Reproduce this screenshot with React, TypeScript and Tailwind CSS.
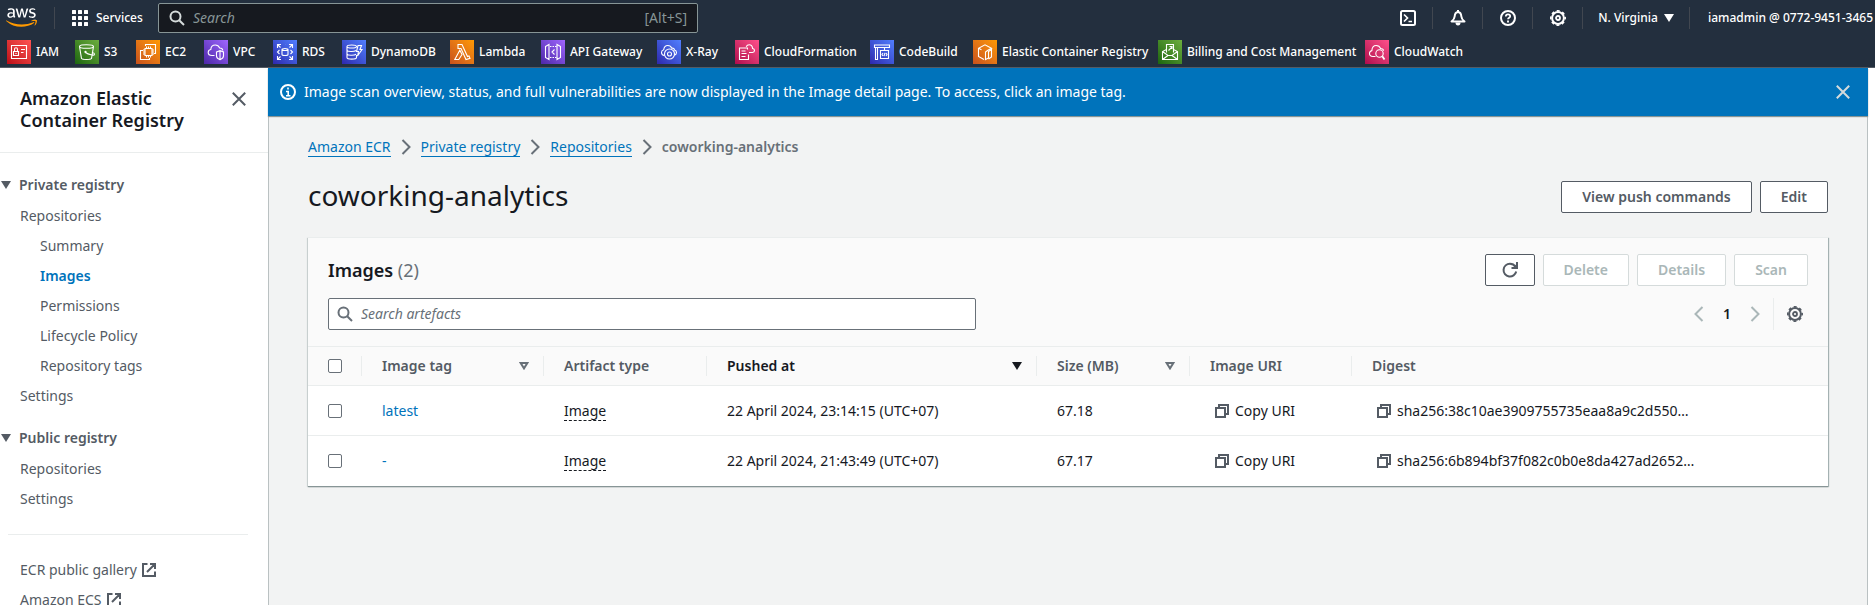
import React from "react";
import { FaAws } from "react-icons/fa";

type IconProps = { children: React.ReactNode; className?: string; width?: number };

/* 16-unit stroked icon */
function Icon({ children, className = "", width = 2 }: IconProps) {
  return (
    <svg viewBox="0 0 16 16" className={`size-4 shrink-0 ${className}`} fill="none" stroke="currentColor" strokeWidth={width} aria-hidden="true">
      {children}
    </svg>
  );
}

const GearIcon = ({ className }: { className?: string }) => (
  <Icon className={className}>
    <circle cx="8" cy="8" r="5.900" />
    <circle cx="8" cy="8" r="7.200" strokeWidth="1.600" strokeDasharray="3 2.655" strokeDashoffset="1.500" />
    <circle cx="8" cy="8" r="2" strokeWidth="1.800" />
  </Icon>
);
const SearchIcon = ({ className }: { className?: string }) => (
  <Icon className={className}>
    <circle cx="6.5" cy="6.5" r="5" />
    <path d="M10.2 10.2l4.8 4.8" />
  </Icon>
);
const CloseIcon = ({ className }: { className?: string }) => (
  <Icon className={className}>
    <path d="M1.8 1.8l12.4 12.4M14.2 1.8L1.8 14.2" />
  </Icon>
);
const ChevronRight = ({ className }: { className?: string }) => (
  <Icon className={className}>
    <path d="M4.5 1l7 7-7 7" />
  </Icon>
);
const ChevronLeft = ({ className }: { className?: string }) => (
  <Icon className={className}>
    <path d="M11.5 1l-7 7 7 7" />
  </Icon>
);
const ExternalIcon = () => (
  <Icon>
    <path d="M6.500 2H2v12h12V9.500M9 2h5v5M14 2L6 10" />
  </Icon>
);
const CopyIcon = () => (
  <Icon className="text-[#545b64]">
    <path d="M2 5h9v9H2zM5 5V2h9v9h-3" />
  </Icon>
);
const CaretFilled = ({ className = "" }: { className?: string }) => (
  <svg viewBox="0 0 10 8" className={`h-2 w-2.5 shrink-0 ${className}`} fill="currentColor" aria-hidden="true">
    <path d="M0 0h10L5 8z" />
  </svg>
);
const CaretOutline = () => (
  <svg viewBox="0 0 10 8" className="h-2 w-2.5 shrink-0 text-[#687078]" fill="none" stroke="currentColor" strokeWidth="2" aria-hidden="true">
    <path d="M1.600 1h6.800L5 6.400z" />
  </svg>
);

type Service = { name: string; tile: string; width: string; art: React.ReactNode };

const red = "from-[#bd0816] to-[#ff5252]";
const green = "from-[#1b660f] to-[#6cae3e]";
const orange = "from-[#c8511b] to-[#ff9900]";
const purple = "from-[#4d27a8] to-[#a166ff]";
const blue = "from-[#2e27ad] to-[#527fff]";
const pink = "from-[#b0084d] to-[#ff4f8b]";

const services: Service[] = [
  { name: "IAM", tile: red, width: "w-[68px]", art: <><path d="M4.5 5.5h15v13h-15z" /><path d="M6.5 11.5h5v4h-5zM7.5 11.5V9.3a1.5 1.5 0 013 0v2.2M14 9.5h4M14 12.5h2.5M9 13v1" /></> },
  { name: "S3", tile: green, width: "w-[61px]", art: <><path d="M4.5 6.5c0 2.4 14 2.4 14 0s-14-2.400-14 0l2 12c1 1.300 9 1.300 10 0l2-12M10.500 12.500c3 2 8.500 3.500 9 2 .3-1-1.500-2-2.500-2.500" /><circle cx="10.500" cy="12" r=".6" /></> },
  { name: "EC2", tile: orange, width: "w-[68px]", art: <><path d="M9 8.500h7v7H9zM10.500 8.500V6.500M12.500 8.500V6.500M14.500 8.500V6.500M10.500 17.500v-2M12.500 17.500v-2M14.500 17.500v-2M9 10H7M9 12H7M9 14H7M18 10h-2M18 12h-2M18 14h-2" /><path d="M9.500 6V4.500h10v9H18M7 10.500H4.500v9h9V18" /></> },
  { name: "VPC", tile: purple, width: "w-[69px]", art: <><path d="M10.500 15.500H8c-2.500 0-3.800-1.200-3.800-3 0-1.900 1.300-2.800 2.600-3C7 6.500 9 5 11.300 5c2.200 0 3.700 1.300 4.400 3 2 0 3 1 3.100 2.500" /><path d="M12.500 12l3.500-1.300 3.500 1.300v4c0 1.700-1.500 2.900-3.500 3.700-2-.8-3.500-2-3.500-3.700zM16 10.700v9" /></> },
  { name: "RDS", tile: blue, width: "w-[69px]", art: <><path d="M9 9.500c0 1.300 6 1.300 6 0s-6-1.300-6 0v5c0 1.300 6 1.300 6 0v-5" /><path d="M4.500 8V4.500H8M4.500 4.500L7.500 7.500M16 4.500h3.500V8M19.500 4.500l-3 3M4.500 16v3.500H8M4.500 19.500l3-3M16 19.500h3.500V16M19.500 19.500l-3-3M6.500 10l-2 2 2 2M17.500 10l2 2-2 2M12 4.500h.1M12 19.500h.1" /></> },
  { name: "DynamoDB", tile: blue, width: "w-[108px]", art: <><path d="M5 6.500c0 2 9.500 2 9.500 0s-9.500-2-9.500 0v11c0 2.200 9.500 2.200 9.500 0v-2.500M5 10c0 1.800 7 2 9 .5M5 13.700c0 1.800 7 2 9 .5" /><path d="M16 5.500h3.500l-1.500 4h2L15.500 16l1-4.500h-2z" /></> },
  { name: "Lambda", tile: orange, width: "w-[91px]", art: <path d="M8 4.500h4l5.500 12 1.500-.6 1 2.400-4 1.200L11 8.500H8zM9.800 10.200L4.800 19.500h4L12 14.500z" /> },
  { name: "API Gateway", tile: purple, width: "w-[116px]", art: <><path d="M4.500 6.500L8 4.500v15l-3.500-2zM19.500 6.500L16 4.500v15l3.500-2zM13.500 9.500L11 12l2.500 2.500" /><path d="M9 6.500h7M9 17.500h7" strokeDasharray="1.500 1" /></> },
  { name: "X-Ray", tile: blue, width: "w-[78px]", art: <><path d="M7.500 15.500c-2-.3-3-1.400-3-3 0-1.500 1-2.400 2.200-2.700C7 6.800 8.800 5.500 10.800 5.500c2 0 3.300 1 4 2.700 1.600-.4 2.500.5 2.700 1.800 1.300.3 2 1.200 2 2.500s-.8 2.200-2 2.700" /><circle cx="12.500" cy="14" r="5" /><circle cx="12.500" cy="14" r="2" /></> },
  { name: "CloudFormation", tile: pink, width: "w-[135px]", art: <><path d="M12.500 9.500V8h-8v11.500h9v-5M6.500 11h4M6.500 13.500h5M6.500 16.500h4" /><path d="M14 12.500h3.500c1.300-.1 2-.9 2-2 0-1.200-.8-1.900-1.900-2C17.300 6 16 4.800 14.200 4.800c-1.500 0-2.500.8-3 2" /></> },
  { name: "CodeBuild", tile: blue, width: "w-[103px]", art: <><path d="M4.500 5h15v2.500h-15zM5.500 7.500v12h2v-12M14.500 7.500v3" /><path d="M10.500 10.500h8v8h-8zM13 13l-1 1.500 1 1.500M16 13l1 1.500-1 1.500M15 12.800l-1 3.400" /></> },
  { name: "Elastic Container Registry", tile: orange, width: "w-[185px]", art: <path d="M11 19.500l-5.500-3V8.300L12 4.800l6.500 3.500-4 2.200-2 1.500v7.500l3-1.500v-6.500l3-2v7.500l-3 2M5.500 8.300l3 1.500" /> },
  { name: "Billing and Cost Management", tile: green, width: "w-[207px]", art: <><path d="M8.500 12.500v-8h7v8M10.500 10.500l3.500-3.500M11.500 6.500h2.500V9" /><path d="M8.500 9.500l-4 2v8h15v-8l-4-2M4.500 11.500l5.500 4h4l5.500-4M4.500 19.500l5.500-4M19.500 19.500l-5.500-4" /></> },
  { name: "CloudWatch", tile: pink, width: "w-[110px]", art: <><path d="M10.500 16.500H8c-2.300-.1-3.500-1.300-3.500-3s1-2.600 2.400-2.900C7 7.200 9 5.500 11.200 5.500c2.200 0 3.700 1.300 4.400 3 1.700 0 2.800.8 3 2.300" /><circle cx="14.500" cy="13.500" r="3.700" /><path d="M17.300 16.200l2.200 3.300" strokeWidth="1.800" /></> },
];

function TopDivider() {
  return <span className="h-[22px] w-px shrink-0 bg-[#414750]" />;
}

function TopButton({ label, children }: { label: string; children: React.ReactNode }) {
  return (
    <button type="button" aria-label={label} className="flex w-[49px] shrink-0 justify-center text-white">
      {children}
    </button>
  );
}

function TopBar() {
  return (
    <header className="shrink-0 overflow-hidden border-b border-[#545b64] bg-[#232f3e] text-white">
      <div className="flex h-[35px] items-center">
        <a href="#home" aria-label="AWS home" className="ml-1.5 mr-[17px] shrink-0">
          <svg className="absolute size-0" aria-hidden="true">
            <linearGradient id="aws-mark" x1="0" y1="0" x2="0" y2="1">
              <stop offset="0.630" stopColor="#fff" />
              <stop offset="0.630" stopColor="#f90" />
            </linearGradient>
          </svg>
          <FaAws className="h-[25px] w-[31px]" fill="url(#aws-mark)" />
        </a>
        <TopDivider />
        <button type="button" className="ml-[17px] flex w-[86px] shrink-0 items-center gap-2 text-[12px] font-medium">
          <svg viewBox="0 0 16 16" className="size-4 shrink-0" fill="currentColor" aria-hidden="true">
            {[0, 6, 12].flatMap((y) => [0, 6, 12].map((x) => <rect key={`${x}-${y}`} x={x} y={y} width="4" height="4" rx=".5" />))}
          </svg>
          Services
        </button>
        <label className="flex h-[30px] w-[540px] shrink-0 items-center rounded-xs border border-[#879596] bg-[#16191f] px-2.5">
          <SearchIcon className="text-[#d5dbdb]" />
          <input aria-label="Search" placeholder="Search" className="ml-2 min-w-0 flex-1 bg-transparent text-[14px] italic outline-none placeholder:text-[#879596]" />
          <span className="text-[14px] text-[#879596]">[Alt+S]</span>
        </label>
        <div className="ml-auto flex shrink-0 items-center">
          <TopButton label="CloudShell">
            <Icon>
              <rect x="1" y="1" width="14" height="14" rx="1.500" />
              <path d="M4 4.500L7.500 8 4 11.500M8.500 11.500H12" strokeWidth="1.700" />
            </Icon>
          </TopButton>
          <TopDivider />
          <TopButton label="Notifications">
            <Icon>
              <path d="M8 2C5.800 2.300 4.800 4 4.700 6.300 4.600 8.500 3.500 10 1.500 11.500h13c-2-1.500-3.100-3-3.200-5.200C11.200 4 10.200 2.300 8 2z" strokeLinejoin="round" />
              <path d="M8 0v2.500" />
              <path d="M5.500 12.500h5a2.500 3 0 01-5 0z" fill="currentColor" stroke="none" />
            </Icon>
          </TopButton>
          <TopDivider />
          <TopButton label="Help">
            <Icon>
              <circle cx="8" cy="8" r="7" />
              <path d="M5.800 6.500C5.800 5 6.700 4.300 8 4.300s2.200.8 2.200 1.900C10.200 7.700 8 7.700 8 9.300" strokeWidth="1.700" />
              <path d="M8 10.500v2" strokeWidth="1.900" />
            </Icon>
          </TopButton>
          <TopDivider />
          <TopButton label="Settings">
            <GearIcon />
          </TopButton>
          <TopDivider />
          <button type="button" className="flex w-[106px] items-center justify-center gap-1.5 whitespace-nowrap text-[12px] font-medium">
            N. Virginia
            <CaretFilled />
          </button>
          <TopDivider />
          <button type="button" className="w-[185px] whitespace-nowrap pl-[18px] text-left text-[12px] font-medium">
            iamadmin @ 0772-9451-3465
          </button>
        </div>
      </div>
      <nav aria-label="Favourites" className="flex h-8 items-end pb-[3px] pl-[7px]">
        {services.map((s) => (
          <a key={s.name} href="#service" className={`flex shrink-0 items-center gap-[5px] whitespace-nowrap text-[12px] font-medium ${s.width}`}>
            <span className={`size-6 shrink-0 bg-linear-to-tr ${s.tile}`}>
              <svg viewBox="0 0 24 24" className="size-6" fill="none" stroke="#fff" strokeWidth="1.100" aria-hidden="true">
                {s.art}
              </svg>
            </span>
            {s.name}
          </a>
        ))}
      </nav>
    </header>
  );
}

function NavItem({ label, nested = false, active = false, external = false }: { label: string; nested?: boolean; active?: boolean; external?: boolean }) {
  return (
    <li className={nested ? "pl-10" : "pl-5"}>
      <a href="#nav" className={`flex h-[30px] items-center gap-1 ${active ? "font-semibold text-[#0073bb]" : ""}`}>
        {label}
        {external && <ExternalIcon />}
      </a>
    </li>
  );
}

function NavHeading({ label }: { label: string }) {
  return (
    <button type="button" className="flex h-8 w-full items-center gap-2 pl-px font-semibold">
      <CaretFilled />
      {label}
    </button>
  );
}

function Sidebar() {
  return (
    <aside className="w-[268px] shrink-0 overflow-hidden bg-white text-[14px] text-[#545b64]">
      <div className="flex items-start justify-between border-b border-[#eaeded] pb-[21px] pl-5 pr-[21px] pt-[19px]">
        <h2 className="w-44 text-[18px] font-semibold leading-[22px] text-[#16191f]">Amazon Elastic Container Registry</h2>
        <button type="button" aria-label="Close navigation" className="mt-1">
          <CloseIcon />
        </button>
      </div>
      <nav aria-label="Registry" className="pt-4">
        <NavHeading label="Private registry" />
        <ul>
          <NavItem label="Repositories" />
          <NavItem label="Summary" nested />
          <NavItem label="Images" nested active />
          <NavItem label="Permissions" nested />
          <NavItem label="Lifecycle Policy" nested />
          <NavItem label="Repository tags" nested />
          <NavItem label="Settings" />
        </ul>
        <div className="h-[11px]" />
        <NavHeading label="Public registry" />
        <ul>
          <NavItem label="Repositories" />
          <NavItem label="Settings" />
        </ul>
        <hr className="mb-5 ml-2 mr-5 mt-5 border-[#eaeded]" />
        <ul>
          <NavItem label="ECR public gallery" external />
          <NavItem label="Amazon ECS" external />
        </ul>
      </nav>
    </aside>
  );
}

function Button({ children, disabled = false, label }: { children: React.ReactNode; disabled?: boolean; label?: string }) {
  return (
    <button
      type="button"
      disabled={disabled}
      aria-label={label}
      className={`flex h-8 items-center whitespace-nowrap rounded-xs border bg-white text-[14px] font-semibold ${label ? "px-4" : "px-5"} ${disabled ? "border-[#d5dbdb] text-[#aab7b8]" : "border-[#545b64] text-[#545b64]"}`}
    >
      {children}
    </button>
  );
}

function Crumb({ label }: { label: string }) {
  return (
    <li className="flex items-center gap-[7px]">
      <a href="#crumb" className="border-b border-[#0073bb] leading-[18px] text-[#0073bb]">{label}</a>
      <ChevronRight className="text-[#687078]" />
    </li>
  );
}

type Column = { label: string; width: string; sort?: "idle" | "active" };
const columns: Column[] = [
  { label: "Image tag", width: "w-[182px]", sort: "idle" },
  { label: "Artifact type", width: "w-[163px]" },
  { label: "Pushed at", width: "w-[330px]", sort: "active" },
  { label: "Size (MB)", width: "w-[153px]", sort: "idle" },
  { label: "Image URI", width: "w-[162px]" },
  { label: "Digest", width: "" },
];

const rows = [
  { tag: "latest", pushed: "22 April 2024, 23:14:15 (UTC+07)", size: "67.18", digest: "sha256:38c10ae3909755735eaa8a9c2d550…" },
  { tag: "-", pushed: "22 April 2024, 21:43:49 (UTC+07)", size: "67.17", digest: "sha256:6b894bf37f082c0b0e8da427ad2652…" },
];

const CheckBox = ({ label }: { label: string }) => (
  <input type="checkbox" aria-label={label} className="block size-3.5 appearance-none rounded-xs border border-[#687078] bg-white" />
);

function ImagesTable() {
  return (
    <table className="w-full table-fixed border-collapse bg-white text-left">
      <thead>
        <tr className="h-[39px] border-y border-[#eaeded] bg-[#fafafa] text-[#545b64]">
          <th className="w-[53px] pl-5">
            <CheckBox label="Select all images" />
          </th>
          {columns.map((c) => (
            <th key={c.label} className={`p-0 font-semibold ${c.width} ${c.sort === "active" ? "text-[#16191f]" : ""}`}>
              <div className="flex h-5 items-center justify-between border-l border-[#eaeded] pl-5 pr-3.5">
                {c.label}
                {c.sort === "idle" && <CaretOutline />}
                {c.sort === "active" && <CaretFilled />}
              </div>
            </th>
          ))}
        </tr>
      </thead>
      <tbody>
        {rows.map((r) => (
          <tr key={r.tag} className="h-[50px] border-b border-[#eaeded] last:border-0">
            <td className="pl-5">
              <CheckBox label={`Select ${r.tag}`} />
            </td>
            <td className="pl-[21px]">
              <a href="#image" className="text-[#0073bb]">{r.tag}</a>
            </td>
            <td className="pl-[21px]">
              <span className="border-b border-dashed border-[#16191f] leading-4">Image</span>
            </td>
            <td className="pl-[21px]">{r.pushed}</td>
            <td className="pl-[21px]">{r.size}</td>
            <td className="pl-[25px]">
              <button type="button" className="flex items-center gap-[5px]">
                <CopyIcon />
                Copy URI
              </button>
            </td>
            <td className="pl-[25px]">
              <div className="flex items-center gap-[5px]">
                <button type="button" aria-label="Copy digest">
                  <CopyIcon />
                </button>
                {r.digest}
              </div>
            </td>
          </tr>
        ))}
      </tbody>
    </table>
  );
}

export default function App() {
  return (
    <div className="flex h-screen flex-col overflow-hidden bg-white font-['Noto_Sans',sans-serif] text-[14px] leading-5 text-[#16191f]">
      <TopBar />
      <div className="flex min-h-0 flex-1">
        <Sidebar />
        <main className="mr-[7px] min-w-0 flex-1 border-x border-[#bac1c2] bg-[#f2f3f3]">
          <div role="status" className="-mx-px flex h-12 items-center gap-2 bg-[#0073bb] pl-3 pr-[17px] text-white shadow-[0_1px_1px_#879596]">
            <Icon>
              <circle cx="8" cy="8" r="7" />
              <path d="M8 3.500v2M6 7.500h2.200V12M6 11.700h4.500" strokeWidth="1.600" />
            </Icon>
            <p className="flex-1">
              Image scan overview, status, and full vulnerabilities are now displayed in the Image detail page. To access, click an image tag.
            </p>
            <button type="button" aria-label="Dismiss" className="text-[#d5dbdb]">
              <CloseIcon />
            </button>
          </div>
          <div className="px-[39px] pt-[21px]">
            <nav aria-label="Breadcrumb">
              <ol className="flex items-center gap-[7px]">
                <Crumb label="Amazon ECR" />
                <Crumb label="Private registry" />
                <Crumb label="Repositories" />
                <li className="font-semibold text-[#687078]">coworking-analytics</li>
              </ol>
            </nav>
            <div className="mt-5 flex h-10 items-center justify-between">
              <h1 className="self-start text-[28px] leading-9">coworking-analytics</h1>
              <div className="flex gap-2">
                <Button>View push commands</Button>
                <Button>Edit</Button>
              </div>
            </div>
            <section className="mt-5 border-t border-[#eaeded] bg-[#fafafa] shadow-[0_1px_1px_#879596,1px_1px_1px_#aab7b8,-1px_1px_1px_#d5dbdb]">
              <div className="flex items-center justify-between px-5 pt-4">
                <h2 className="text-[18px] font-semibold leading-[22px]">
                  Images <span className="font-normal text-[#687078]">(2)</span>
                </h2>
                <div className="flex gap-2">
                  <Button label="Refresh">
                    <Icon>
                      <path d="M14.200 9.500A6.400 6.400 0 118 1.700c2.500 0 4.300 1.200 5.500 3M15 0v6H9.500" />
                      <path d="M11 5.500h3.500V2z" fill="currentColor" stroke="none" />
                    </Icon>
                  </Button>
                  <Button disabled>Delete</Button>
                  <Button disabled>Details</Button>
                  <Button disabled>Scan</Button>
                </div>
              </div>
              <div className="flex items-center justify-between px-5 pb-4 pt-3">
                <label className="flex h-8 w-[648px] items-center rounded-xs border border-[#687078] bg-white pl-2 text-[#687078]">
                  <SearchIcon />
                  <input aria-label="Search artefacts" placeholder="Search artefacts" className="ml-2 min-w-0 flex-1 bg-transparent italic outline-none placeholder:text-[#687078]" />
                </label>
                <div className="flex h-8 items-center">
                  <button type="button" disabled aria-label="Previous page" className="text-[#aab7b8]">
                    <ChevronLeft />
                  </button>
                  <button type="button" className="w-10 text-center font-semibold">1</button>
                  <button type="button" disabled aria-label="Next page" className="text-[#aab7b8]">
                    <ChevronRight />
                  </button>
                  <div className="ml-2.5 flex h-8 items-center border-l border-[#eaeded] pl-[13px] pr-[5px]">
                    <button type="button" aria-label="Preferences" className="text-[#545b64]">
                      <GearIcon />
                    </button>
                  </div>
                </div>
              </div>
              <ImagesTable />
            </section>
          </div>
        </main>
      </div>
    </div>
  );
}
